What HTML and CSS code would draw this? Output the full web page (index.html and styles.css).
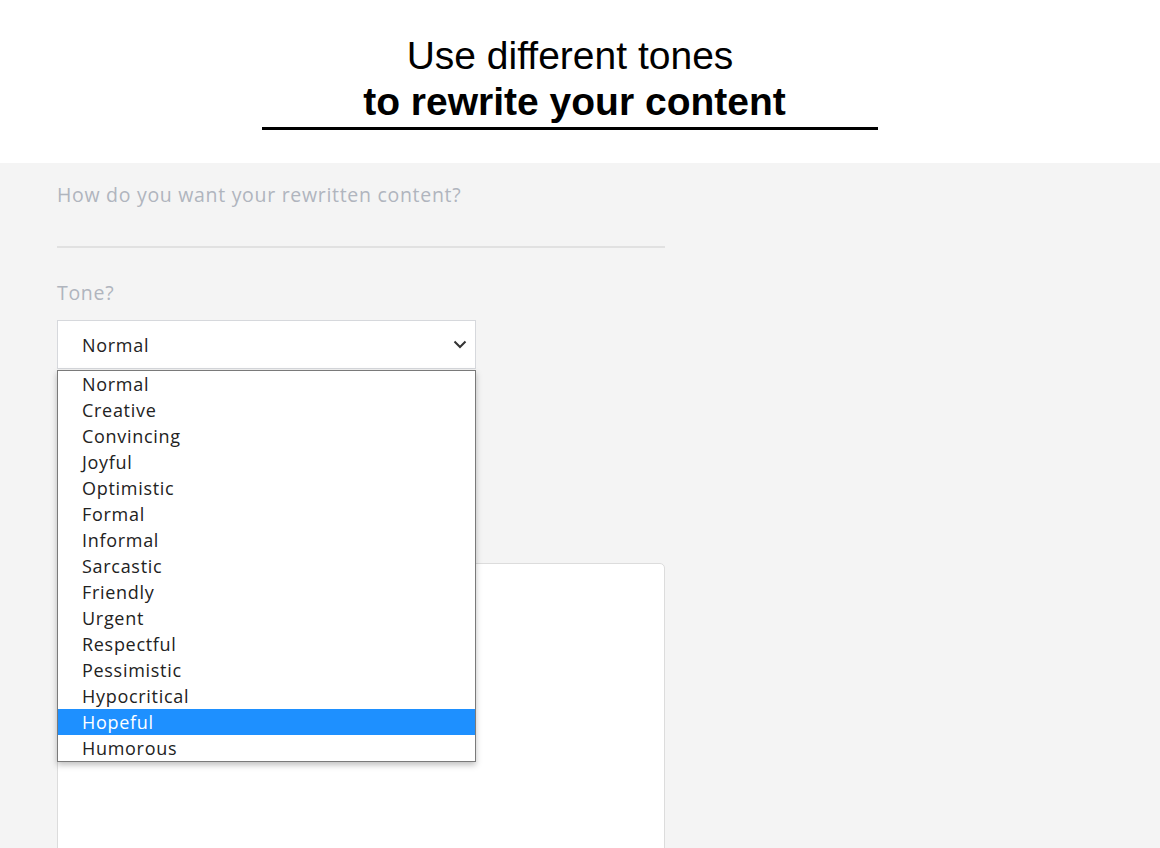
FILE: index.html
```html
<!DOCTYPE html>
<html>
<head>
<meta charset="utf-8">
<link rel="stylesheet" href="styles.css">
</head>
<body>
<header class="hero">
  <div class="hero-inner">
    <h1 class="title"><span class="t1">Use different tones</span><span class="t2">to rewrite your content</span></h1>
    <div class="rule"></div>
  </div>
</header>
<main class="panel">
  <div class="form">
    <p class="label first">How do you want your rewritten content?</p>
    <div class="divider"></div>
    <p class="label">Tone?</p>
    <div class="select-wrap">
      <div class="select">
        <span>Normal</span>
        <svg class="chev" width="14" height="9" viewBox="0 0 14 9"><path d="M1.5 1.5 L7 7 L12.5 1.5" fill="none" stroke="#333" stroke-width="2"/></svg>
      </div>
      <ul class="options">
        <li>Normal</li>
        <li>Creative</li>
        <li>Convincing</li>
        <li>Joyful</li>
        <li>Optimistic</li>
        <li>Formal</li>
        <li>Informal</li>
        <li>Sarcastic</li>
        <li>Friendly</li>
        <li>Urgent</li>
        <li>Respectful</li>
        <li>Pessimistic</li>
        <li>Hypocritical</li>
        <li class="active">Hopeful</li>
        <li>Humorous</li>
      </ul>
    </div>
    <div class="textarea"></div>
  </div>
</main>
</body>
</html>
```
FILE: styles.css
```css
html, body {
  margin: 0;
  padding: 0;
  overflow: hidden;
  height: 848px;
}
body {
  background: #f4f4f4;
  font-family: "Open Sans", "Noto Sans", sans-serif;
}
.hero {
  background: #fff;
  height: 163px;
  padding-top: 33px;
  box-sizing: border-box;
}
.hero-inner {
  width: 616px;
  margin-left: 262px;
}
.title {
  margin: 0;
  font-family: "Liberation Sans", Arial, sans-serif;
  font-size: 39px;
  line-height: 46px;
  color: #000;
  text-align: center;
  display: flex;
  flex-direction: column;
}
.t1 { font-weight: 400; }
.t2 { font-weight: 700; padding-left: 9px; }
.rule {
  height: 3px;
  background: #000;
  margin-top: 2px;
}
.panel {
  padding: 0 0 0 57px;
}
.form {
  width: 608px;
}
.label {
  margin: 0;
  color: #b0b5be;
  font-size: 19.5px;
  letter-spacing: 0.7px;
  line-height: 24px;
}
.label.first {
  padding-top: 20px;
}
.divider {
  height: 2px;
  background: #e1e1e1;
  margin-top: 39px;
  margin-bottom: 33px;
}
.select-wrap {
  position: relative;
  margin-top: 15px;
  width: 419px;
}
.select {
  height: 49px;
  box-sizing: border-box;
  background: #fff;
  border: 1px solid #d6d8dc;
  display: flex;
  align-items: center;
  justify-content: space-between;
  padding: 0 8px 0 24px;
  font-size: 18px;
  letter-spacing: 0.7px;
  color: #222;
}
.options {
  position: absolute;
  top: 50px;
  left: 0;
  width: 419px;
  box-sizing: border-box;
  margin: 0;
  padding: 0;
  list-style: none;
  background: #fff;
  border: 1px solid #7a7a7a;
  box-shadow: 0 3px 6px rgba(0,0,0,0.25);
  z-index: 2;
}
.options li {
  height: 26px;
  line-height: 26px;
  padding-left: 24px;
  font-size: 18px;
  letter-spacing: 0.7px;
  color: #222;
}
.options li.active {
  background: #1e90ff;
  color: #fff;
}
.textarea {
  margin-top: 194px;
  height: 300px;
  background: #fff;
  border: 1px solid #dcdcdc;
  border-radius: 5px;
}
```
